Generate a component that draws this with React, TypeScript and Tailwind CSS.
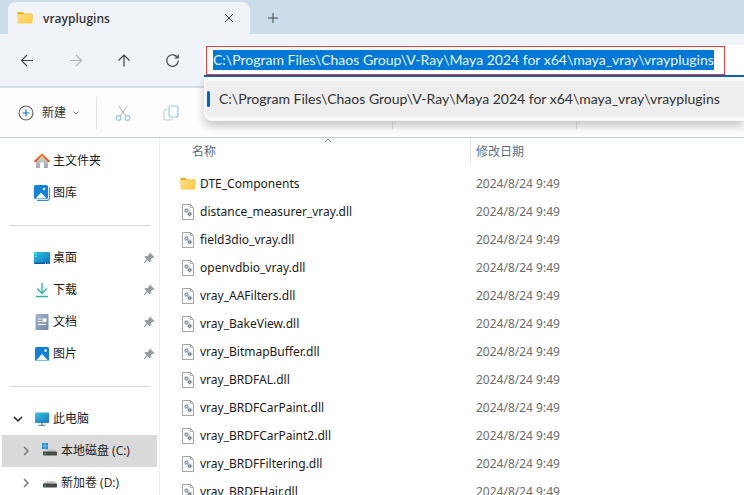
import type { ReactNode } from 'react'

const PATH = 'C:\\Program Files\\Chaos Group\\V-Ray\\Maya 2024 for x64\\maya_vray\\vrayplugins'
const MODIFIED = '2024/8/24 9:49'

const FILES = [
  'DTE_Components',
  'distance_measurer_vray.dll',
  'field3dio_vray.dll',
  'openvdbio_vray.dll',
  'vray_AAFilters.dll',
  'vray_BakeView.dll',
  'vray_BitmapBuffer.dll',
  'vray_BRDFAL.dll',
  'vray_BRDFCarPaint.dll',
  'vray_BRDFCarPaint2.dll',
  'vray_BRDFFiltering.dll',
  'vray_BRDFHair.dll',
]

const FolderIcon = () => (
  <svg width="16" height="16" viewBox="0 0 16 16" className="shrink-0">
    <path d="M.5 3a1 1 0 0 1 1-1h4l1.500 1.500h7.500a1 1 0 0 1 1 1V8H.5z" fill="#f5b114" />
    <rect x=".5" y="4.200" width="15" height="9.300" rx="1" fill="url(#folder)" />
    <defs>
      <linearGradient id="folder" x1="0" y1="0" x2="1" y2="1">
        <stop stopColor="#ffe08a" />
        <stop offset="1" stopColor="#fdc83f" />
      </linearGradient>
    </defs>
  </svg>
)

const DllIcon = () => (
  <svg width="16" height="16" viewBox="0 0 16 16" className="shrink-0">
    <path d="M2.500.5h8l3 3v12h-11z" fill="#fafafa" stroke="#a6a6a6" />
    <path d="M10.500.5v3h3" fill="none" stroke="#bdbdbd" />
    <circle cx="6.500" cy="6.500" r="1.300" fill="#c9d1d8" stroke="#98a4af" strokeWidth="1.200" />
    <circle cx="6.500" cy="6.500" r="2.200" fill="none" stroke="#98a4af" strokeWidth=".8" strokeDasharray=".86 .86" />
    <circle cx="9.700" cy="9.900" r="1.200" fill="#c0c6cc" stroke="#737e88" strokeWidth="1.100" />
    <circle cx="9.700" cy="9.900" r="2" fill="none" stroke="#737e88" strokeWidth=".8" strokeDasharray=".78 .78" />
  </svg>
)

const HomeIcon = () => (
  <svg width="16" height="16" viewBox="0 0 16 16">
    <path d="M2 7.500 8 2l6 5.500V14a1 1 0 0 1-1 1h-3v-4a2 2 0 0 0-4 0v4H3a1 1 0 0 1-1-1z" fill="url(#wall)" />
    <path d="m1.200 8.300 6.800-6.800 6.800 6.800" fill="none" stroke="url(#roof)" strokeWidth="2" strokeLinecap="round" strokeLinejoin="round" />
    <defs>
      <linearGradient id="wall" x1="0" y1="0" x2="0" y2="1">
        <stop stopColor="#d8dadc" />
        <stop offset="1" stopColor="#a4a7ab" />
      </linearGradient>
      <linearGradient id="roof" x1="0" y1="0" x2="0" y2="1">
        <stop stopColor="#f08a24" />
        <stop offset="1" stopColor="#d4541c" />
      </linearGradient>
    </defs>
  </svg>
)

const GalleryIcon = () => (
  <svg width="16" height="16" viewBox="0 0 16 16">
    <path d="M3 15.400h10.500a1.900 1.900 0 0 0 1.900-1.900V2.500" fill="none" stroke="#3a86cc" strokeWidth="1.100" />
    <rect width="14" height="14" rx="1.500" fill="#1583d8" />
    <path d="m1.500 13.500 5.500-6 5.500 6z" fill="#f4faff" />
    <circle cx="10" cy="4" r="1.200" fill="#fff" />
  </svg>
)

const DesktopIcon = () => (
  <svg width="16" height="16" viewBox="0 0 16 16">
    <rect y="2" width="16" height="12" rx="1" fill="url(#desk)" />
    <path d="M1.500 4h1M1.500 6.500h1" stroke="#e6fbff" strokeWidth="1.200" />
    <path d="M0 12.500h16V13a1 1 0 0 1-1 1H1a1 1 0 0 1-1-1z" fill="#0c5f9e" />
    <path d="M11 13.300h1M13.500 13.300h1" stroke="#cfefff" strokeWidth=".8" />
    <defs>
      <linearGradient id="desk" x1="0" y1="0" x2="1" y2="1">
        <stop stopColor="#2bc7dc" />
        <stop offset="1" stopColor="#0c6fc0" />
      </linearGradient>
    </defs>
  </svg>
)

const DownloadIcon = () => (
  <svg width="16" height="16" viewBox="0 0 16 16" fill="none" stroke="#2bb39a" strokeWidth="1.300" strokeLinecap="round" strokeLinejoin="round">
    <path d="M8 1.500V11M3.500 7 8 11.500 12.500 7M2.500 14.500h11" />
  </svg>
)

const DocumentIcon = () => (
  <svg width="16" height="16" viewBox="0 0 16 16">
    <rect x="1.500" width="13" height="16" rx="1" fill="url(#doc)" />
    <path d="M4 5h3.500M4 7.500h3.500M4 10.500h8" stroke="#fff" strokeWidth="1.200" />
    <rect x="8.500" y="4.400" width="4" height="3.700" fill="#fff" />
    <defs>
      <linearGradient id="doc" x1="0" y1="0" x2="1" y2="1">
        <stop stopColor="#a5b5ca" />
        <stop offset="1" stopColor="#6f87a8" />
      </linearGradient>
    </defs>
  </svg>
)

const PictureIcon = () => (
  <svg width="16" height="16" viewBox="0 0 16 16">
    <rect x="1" y="1" width="14" height="14" rx="1.500" fill="#1180d6" />
    <path d="m2 14.500 6-6.500 6 6.500z" fill="#f4faff" />
    <circle cx="11.500" cy="4.500" r="1.300" fill="#fff" />
  </svg>
)

const PcIcon = () => (
  <svg width="16" height="16" viewBox="0 0 16 16">
    <rect x="1" y="1.500" width="14" height="10.500" rx=".8" fill="url(#pc)" />
    <path d="M8 12v2.200M4.500 14.300h7" stroke="#7c8791" strokeWidth="1.300" />
    <defs>
      <linearGradient id="pc" x1="0" y1="0" x2="1" y2="1">
        <stop stopColor="#35c9de" />
        <stop offset="1" stopColor="#1a74b8" />
      </linearGradient>
    </defs>
  </svg>
)

const DriveIcon = ({ system }: { system?: boolean }) => (
  <svg width="16" height="16" viewBox="0 0 16 16">
    {system && <path d="M0 0h2.700v2.700H0zM3.300 0H6v2.700H3.300zM0 3.300h2.700V6H0zM3.300 3.300H6V6H3.300z" fill="#1a8ce0" />}
    <path d="M4 6h8.500L15 9H1z" fill="#c6c6c6" />
    <rect x="1" y="8.500" width="14" height="4" rx=".8" fill="#484848" />
    <path d="M2.500 10.800H4" stroke="#39d353" strokeWidth="1.200" />
  </svg>
)

const PinIcon = () => (
  <svg width="12" height="12" viewBox="0 0 12 12" className="ml-auto mr-[2px]" fill="#8f9aa3">
    <path d="M7 .8 11.300 5l-.9.9-.8-.1-1.900 1.900.1 1.900-1 1L4.600 8.300 1.400 11.200l-.7-.6L3.600 7.300 1.400 5.100l1-1 2 .1 1.900-1.900-.2-.7z" />
  </svg>
)

const Chevron = ({ open }: { open?: boolean }) => (
  <svg width="12" height="12" viewBox="0 0 12 12" fill="none" stroke={open ? '#222' : '#777'} strokeWidth="1.500">
    <path d={open ? 'm2 4 4 4 4-4' : 'm4 2 4 4-4 4'} />
  </svg>
)

type Item = { label: string; icon: ReactNode; pinned?: boolean }

const TOP: Item[] = [
  { label: '主文件夹', icon: <HomeIcon /> },
  { label: '图库', icon: <GalleryIcon /> },
]

const PINNED: Item[] = [
  { label: '桌面', icon: <DesktopIcon />, pinned: true },
  { label: '下载', icon: <DownloadIcon />, pinned: true },
  { label: '文档', icon: <DocumentIcon />, pinned: true },
  { label: '图片', icon: <PictureIcon />, pinned: true },
]

const SideLink = ({ label, icon, pinned }: Item) => (
  <a href="#" className="flex h-8 items-center gap-[3px] pl-8">
    {icon}
    {label}
    {pinned && <PinIcon />}
  </a>
)

const Divider = () => <hr className="my-4 ml-2 mr-[7px] border-[#d9d9d9]" />

const TitleBar = () => (
  <header className="flex h-[34px] shrink-0 items-end bg-[#cbdcea] pl-2">
    <div className="flex h-8 w-[242px] items-center rounded-t-lg bg-[#f0f4f9] pl-[9px] pr-4">
      <FolderIcon />
      <span className="ml-[10px] pt-[2px] text-xs font-semibold text-[#333]">vrayplugins</span>
      <button aria-label="Close tab" className="ml-auto">
        <svg width="10" height="10" viewBox="0 0 10 10" stroke="#444" className="block">
          <path d="m1 1 8 8M9 1 1 9" />
        </svg>
      </button>
    </div>
    <button aria-label="New tab" className="ml-[17px] flex h-8 items-center">
      <svg width="12" height="12" viewBox="0 0 12 12" stroke="#444">
        <path d="M6 1v10M1 6h10" />
      </svg>
    </button>
  </header>
)

const AddressBar = () => (
  <div className="relative z-10 ml-6 min-w-0 flex-1 rounded-tl border-b-2 border-[#0f62b5] bg-white pl-[2px] pt-px font-['Lato',sans-serif] text-sm">
    <div className="flex w-fit border border-[#f03a3a] pb-1 pl-[6px] pr-[10px] pt-[3px]">
      <input
        aria-label="Address"
        defaultValue={PATH}
        className="field-sizing-content h-5 bg-[#0078d7] text-[#eaf5ff] outline-none"
      />
    </div>
    <ul className="absolute inset-x-0 top-full mt-[2px] rounded-bl-lg bg-[#f9f9f9] py-1 pl-[2px] shadow-[0_5px_10px_rgba(0,0,0,0.22)]">
      <li className="flex h-9 items-center gap-[9px] whitespace-nowrap rounded-l bg-[#eeeeee] pl-px text-[#333]">
        <span className="h-4 w-[3px] rounded-full bg-[#0067c0]" />
        {PATH}
      </li>
    </ul>
  </div>
)

const NavBar = () => (
  <div className="flex h-[54px] shrink-0 items-start border-b-2 border-[#d3e0ea] bg-[#f0f4f9] pt-[11px]">
    <div className="flex h-8 items-center gap-8 pl-5">
      <button aria-label="Back">
        <svg width="16" height="16" viewBox="0 0 16 16" fill="none" stroke="#444" strokeWidth="1.200" className="block">
          <path d="M13 7.500H1.500M7 2 1.500 7.500 7 13" />
        </svg>
      </button>
      <button aria-label="Forward">
        <svg width="16" height="16" viewBox="0 0 16 16" fill="none" stroke="#b3b6ba" strokeWidth="1.200" className="block">
          <path d="M2 7.500h11.500M8 2l5.500 5.500L8 13" />
        </svg>
      </button>
      <button aria-label="Up">
        <svg width="16" height="16" viewBox="0 0 16 16" fill="none" stroke="#444" strokeWidth="1.200" className="block">
          <path d="M8 13.500V2M2.500 7.500 8 2l5.500 5.500" />
        </svg>
      </button>
      <button aria-label="Refresh">
        <svg width="16" height="16" viewBox="0 0 16 16" fill="none" stroke="#444" strokeWidth="1.200" className="block">
          <path d="M13.700 5A5.800 5.800 0 1 0 14.300 7.500M14.200 1.500V5h-3.700" />
        </svg>
      </button>
    </div>
    <AddressBar />
  </div>
)

const Toolbar = () => (
  <div className="flex h-[50px] shrink-0 items-center border-b border-[#c3d0d9] bg-[#fdfdfd] pl-[18px]">
    <button className="flex items-center text-xs text-[#333]">
      <svg width="16" height="16" viewBox="0 0 16 16" fill="none">
        <circle cx="8" cy="8" r="7" stroke="#666" strokeWidth="1.200" />
        <path d="M8 4.500v7M4.500 8h7" stroke="#0a74cf" strokeWidth="1.200" />
      </svg>
      <span className="ml-2">新建</span>
      <svg width="6" height="6" viewBox="0 0 6 6" fill="none" stroke="#777" className="ml-[7px]">
        <path d="m.5 1.500 2.500 2.500L5.500 1.500" />
      </svg>
    </button>
    <span className="ml-[17px] h-8 w-px bg-[#e3e3e3]" />
    <button aria-label="Cut" className="ml-[18px]">
      <svg width="16" height="16" viewBox="0 0 16 16" fill="none" className="block">
        <path d="M3.500.5 10.800 11M12.500.5 5.200 11" stroke="#b5b5b5" />
        <circle cx="3.500" cy="13" r="2.300" stroke="#9cc9ef" strokeWidth="1.200" />
        <circle cx="12.500" cy="13" r="2.300" stroke="#9cc9ef" strokeWidth="1.200" />
      </svg>
    </button>
    <button aria-label="Copy" className="ml-8">
      <svg width="16" height="16" viewBox="0 0 16 16" fill="none" className="block">
        <path d="M4 4.500H3a2 2 0 0 0-2 2V13a2 2 0 0 0 2 2h4.500a2 2 0 0 0 2-2" stroke="#c4c4c4" />
        <rect x="6" y="1" width="9" height="11" rx="2" stroke="#9cc9ef" strokeWidth="1.200" />
      </svg>
    </button>
    <span className="ml-[213px] h-8 w-px bg-[#e3e3e3]" />
    <span className="ml-[183px] h-8 w-px bg-[#e3e3e3]" />
  </div>
)

const Sidebar = () => (
  <nav className="w-40 shrink-0 border-r border-[#efefef] pl-[2px] pr-[2px] pt-[7px] text-xs text-[#1c1c1c]">
    {TOP.map((item) => <SideLink key={item.label} {...item} />)}
    <Divider />
    {PINNED.map((item) => <SideLink key={item.label} {...item} />)}
    <Divider />
    <a href="#" className="flex h-8 items-center pl-[10px]">
      <Chevron open />
      <span className="ml-[10px] mr-[3px]"><PcIcon /></span>
      此电脑
    </a>
    <a href="#" className="flex h-8 items-center bg-[#d9d9d9] pl-[18px]">
      <Chevron />
      <span className="ml-[10px] mr-[3px]"><DriveIcon system /></span>
      本地磁盘 (C:)
    </a>
    <a href="#" className="flex h-8 items-center pl-[18px]">
      <Chevron />
      <span className="ml-[10px] mr-[3px]"><DriveIcon /></span>
      新加卷 (D:)
    </a>
  </nav>
)

const FileTable = () => (
  <main className="min-w-0 flex-1 overflow-hidden">
    <table className="w-full table-fixed text-left font-['Noto_Sans','Noto_Sans_CJK_SC',sans-serif] text-xs">
      <thead>
        <tr className="h-8 align-top font-normal text-[#5a6e87]">
          <th className="relative w-[310px] pl-8 pt-[6px] font-normal">
            名称
            <svg width="8" height="5" viewBox="0 0 8 5" fill="none" stroke="#888" className="absolute left-[164px] top-0">
              <path d="m1 4 3-3 3 3" />
            </svg>
          </th>
          <th className="p-0 font-normal">
            <div className="h-[26px] border-l border-[#e5e5e5] pl-[5px] pt-[6px]">修改日期</div>
          </th>
        </tr>
      </thead>
      <tbody>
        {FILES.map((name) => (
          <tr key={name} className="h-7">
            <td className="p-0 pl-5 text-[#1c1c1c]">
              <div className="flex items-center gap-1">
                {name.endsWith('.dll') ? <DllIcon /> : <FolderIcon />}
                {name}
              </div>
            </td>
            <td className="p-0 pl-[6px] text-[#6d6d6d]">{MODIFIED}</td>
          </tr>
        ))}
      </tbody>
    </table>
  </main>
)

export default function App() {
  return (
    <div className="flex h-screen flex-col overflow-hidden bg-white font-['Open_Sans','Noto_Sans_CJK_SC',sans-serif]">
      <TitleBar />
      <NavBar />
      <Toolbar />
      <div className="flex min-h-0 flex-1 overflow-hidden">
        <Sidebar />
        <FileTable />
      </div>
    </div>
  )
}
